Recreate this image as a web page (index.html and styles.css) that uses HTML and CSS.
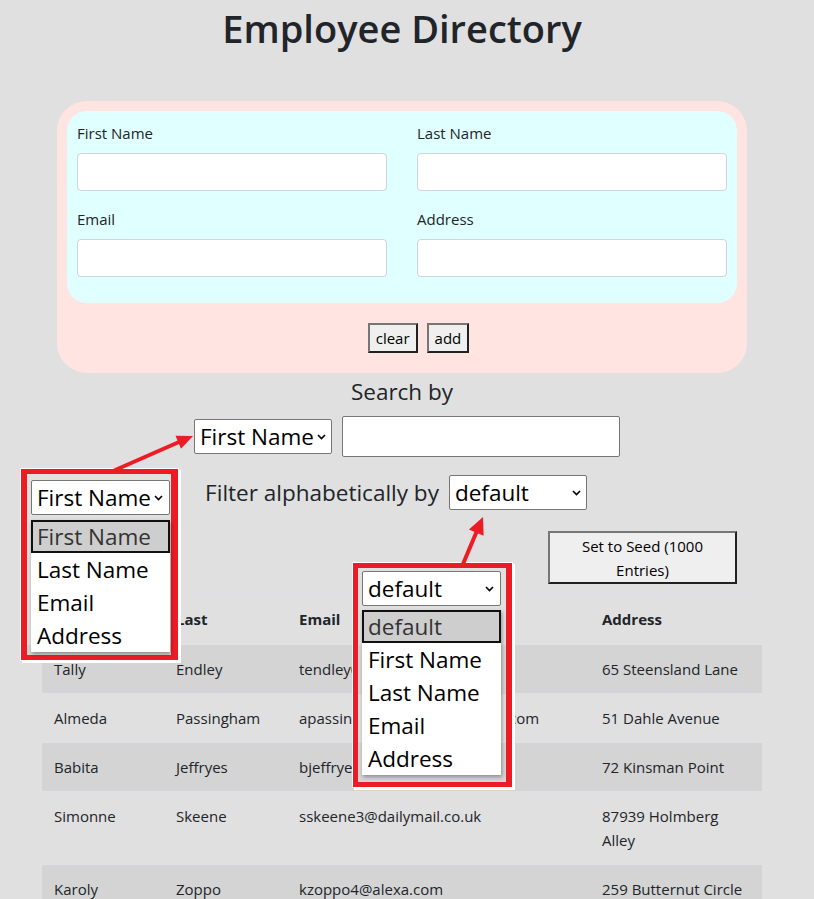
FILE: index.html
```html
<!DOCTYPE html>
<html lang="en">
<head>
<meta charset="utf-8">
<title>Employee Directory</title>
<link rel="stylesheet" href="styles.css">
</head>
<body>
<div class="container">
  <h1 class="title">Employee Directory</h1>
  <div class="inner">
    <form class="form-card">
      <div class="fields">
        <div class="field"><label>First Name</label><input type="text"></div>
        <div class="field"><label>Last Name</label><input type="text"></div>
        <div class="field"><label>Email</label><input type="text"></div>
        <div class="field"><label>Address</label><input type="text"></div>
      </div>
      <div class="actions">
        <button type="button" class="btn">clear</button>
        <button type="button" class="btn">add</button>
      </div>
    </form>
    <div class="search-title">Search by</div>
    <div class="search-row">
      <span class="select-wrap">
        <select class="sel">
          <option>First Name</option>
          <option>Last Name</option>
          <option>Email</option>
          <option>Address</option>
        </select>
        <svg class="chev" viewBox="0 0 9 6"><path d="M1 1 L4.5 4.5 L8 1" fill="none" stroke="#000" stroke-width="1.6"/></svg>
      </span>
      <input class="search-input" type="text">
    </div>
    <div class="filter-row">
      <span class="filter-label">Filter alphabetically by</span>
      <span class="select-wrap">
        <select class="sel">
          <option>default</option>
          <option>First Name</option>
          <option>Last Name</option>
          <option>Email</option>
          <option>Address</option>
        </select>
        <svg class="chev" viewBox="0 0 9 6"><path d="M1 1 L4.5 4.5 L8 1" fill="none" stroke="#000" stroke-width="1.6"/></svg>
      </span>
    </div>
    <div class="seed-row">
      <button type="button" class="btn seed">Set to Seed (1000 Entries)</button>
    </div>
  </div>
  <table class="table">
    <colgroup>
      <col class="c1"><col class="c2"><col class="c3"><col class="c4">
    </colgroup>
    <thead>
      <tr><th>First</th><th>Last</th><th>Email</th><th>Address</th></tr>
    </thead>
    <tbody>
      <tr><td>Tally</td><td>Endley</td><td>tendley0@google.ca</td><td>65 Steensland Lane</td></tr>
      <tr><td>Almeda</td><td>Passingham</td><td>apassingham1@sciencedirect.com</td><td>51 Dahle Avenue</td></tr>
      <tr><td>Babita</td><td>Jeffryes</td><td>bjeffryes2@ning.com</td><td>72 Kinsman Point</td></tr>
      <tr><td>Simonne</td><td>Skeene</td><td>sskeene3@dailymail.co.uk</td><td>87939 Holmberg Alley</td></tr>
      <tr><td>Karoly</td><td>Zoppo</td><td>kzoppo4@alexa.com</td><td>259 Butternut Circle</td></tr>
    </tbody>
  </table>
</div>

<div class="callout callout-left">
  <div class="fake-select"><span>First Name</span><svg class="chev-i" viewBox="0 0 9 6"><path d="M1 1 L4.5 4.5 L8 1" fill="none" stroke="#000" stroke-width="1.6"/></svg></div>
  <div class="fake-list">
    <div class="opt active">First Name</div>
    <div class="opt">Last Name</div>
    <div class="opt">Email</div>
    <div class="opt">Address</div>
  </div>
</div>

<div class="callout callout-right">
  <div class="fake-select"><span>default</span><svg class="chev-i" viewBox="0 0 9 6"><path d="M1 1 L4.5 4.5 L8 1" fill="none" stroke="#000" stroke-width="1.6"/></svg></div>
  <div class="fake-list">
    <div class="opt active">default</div>
    <div class="opt">First Name</div>
    <div class="opt">Last Name</div>
    <div class="opt">Email</div>
    <div class="opt">Address</div>
  </div>
</div>

<svg class="arrows" width="814" height="899" viewBox="0 0 814 899">
  <line x1="113" y1="471" x2="179" y2="442" stroke="#ed1c24" stroke-width="4"/>
  <polygon points="193,436 181,448.7 175.5,435.8" fill="#ed1c24"/>
  <line x1="463" y1="564" x2="476.5" y2="532" stroke="#ed1c24" stroke-width="4"/>
  <polygon points="483,517 483.6,535.8 468.9,529.4" fill="#ed1c24"/>
</svg>
</body>
</html>
```

FILE: styles.css
```css
* { box-sizing: border-box; }

body {
  margin: 0;
  background: #e0e0e0;
  font-family: "Open Sans", "Noto Sans", sans-serif;
  color: #212529;
  font-size: 15px;
  line-height: 24px;
}

.container {
  width: 720px;
  margin-left: 42px;
}

.inner {
  padding: 0 15px;
}

.title {
  margin: 4px 0 49px;
  font-size: 38px;
  line-height: 48px;
  font-weight: 600;
  text-align: center;
}

.form-card {
  margin: 0;
  background: #ffe4e1;
  border-radius: 30px;
  padding: 10px;
}

.fields {
  background: #e0ffff;
  border-radius: 20px;
  padding: 10px;
  display: grid;
  grid-template-columns: 1fr 1fr;
  column-gap: 30px;
}

.field {
  margin-bottom: 16px;
}

.field label {
  display: block;
  margin-bottom: 8px;
  line-height: 24px;
}

.field input {
  display: block;
  width: 100%;
  height: 38px;
  border: 1px solid #ced4da;
  border-radius: 4px;
  background: #fff;
}

.actions {
  display: flex;
  justify-content: center;
  gap: 9px;
  margin: 20px 0 10px;
  padding-left: 33px;
}

.btn {
  font-family: inherit;
  font-size: 15px;
  line-height: 24px;
  padding: 1px 6px;
  border: 2px outset #767676;
  border-radius: 0;
  background: #efefef;
  color: #000;
}

.search-title {
  margin-top: 1px;
  text-align: center;
  font-size: 22.5px;
  line-height: 36px;
}

.search-row {
  display: flex;
  justify-content: center;
  align-items: center;
  gap: 10px;
  margin-top: 6px;
  height: 41px;
  padding-left: 10px;
}

.select-wrap {
  position: relative;
  display: inline-flex;
}

.sel {
  appearance: none;
  -webkit-appearance: none;
  width: 138px;
  height: 35px;
  border: 1px solid #767676;
  border-radius: 2px;
  background: #fff;
  font-family: inherit;
  font-size: 22.5px;
  line-height: 33px;
  padding: 0 0 0 5px;
  color: #000;
}

.chev {
  position: absolute;
  right: 6px;
  top: 15px;
  width: 9px;
  height: 6px;
  pointer-events: none;
}

.search-input {
  width: 278px;
  height: 41px;
  border: 1px solid #767676;
  border-radius: 2px;
  background: #fff;
  font-size: 22.5px;
}

.filter-row {
  display: flex;
  justify-content: center;
  align-items: center;
  gap: 10px;
  margin-top: 18px;
  height: 35px;
  padding-right: 12px;
  font-size: 22.5px;
  line-height: 36px;
}

.seed-row {
  display: flex;
  justify-content: flex-end;
  margin-top: 21px;
  padding-right: 10px;
}

.btn.seed {
  width: 189px;
  height: 53px;
  padding: 0 6px;
}

.table {
  margin-top: 10px;
  width: 720px;
  border-collapse: collapse;
  table-layout: fixed;
}

.c1 { width: 122px; }
.c2 { width: 123px; }
.c3 { width: 303px; }
.c4 { width: 172px; }

.table th,
.table td {
  padding: 12px;
  text-align: left;
  vertical-align: top;
  border-top: 1px solid #dee2e6;
  line-height: 24px;
}

.table thead th {
  border-bottom: 2px solid #dee2e6;
  font-weight: 700;
}

.table tbody tr:nth-child(odd) {
  background: rgba(0, 0, 0, 0.05);
}

/* annotation call-outs */
.callout {
  position: absolute;
  border-style: solid;
  border-color: #ed1c24;
  box-shadow: 0 0 0 1px #fff, 2px 2px 0 1px #fff;
  font-size: 22.5px;
  color: #000;
}

.callout-left {
  left: 21px;
  top: 469px;
  width: 157px;
  height: 191px;
  border-width: 5px 7px 5px 6px;
  padding: 6px 0 0 4px;
  background: linear-gradient(to bottom, #e0e0e0 0 171px, #d5d5d5 171px);
}

.callout-right {
  left: 353px;
  top: 563px;
  width: 159px;
  height: 224px;
  border-width: 5px 6px 5px 5px;
  padding: 3px 0 0 4px;
  background: linear-gradient(to bottom, #e0e0e0 0 77px, #d5d5d5 77px 126px, #e0e0e0 126px 175px, #d5d5d5 175px);
}

.fake-select {
  width: 139px;
  height: 35px;
  border: 1px solid #767676;
  border-radius: 2px;
  background: #fff;
  display: flex;
  align-items: center;
  justify-content: space-between;
  padding: 0 6px 0 5px;
  line-height: 33px;
  white-space: nowrap;
}

.chev-i {
  width: 9px;
  height: 6px;
  flex: none;
}

.fake-list {
  margin-top: 5px;
  width: 139px;
  background: #fff;
  box-shadow: 1px 2px 4px rgba(0, 0, 0, 0.35);
}

.callout-right .fake-list {
  margin-top: 4px;
}

.opt {
  height: 33px;
  line-height: 33px;
  padding-left: 6px;
  white-space: nowrap;
}

.opt.active {
  background: #cecece;
  border: 2px solid #111;
  padding-left: 4px;
  line-height: 29px;
  color: #333;
}

.arrows {
  position: absolute;
  left: 0;
  top: 0;
  pointer-events: none;
}
```
